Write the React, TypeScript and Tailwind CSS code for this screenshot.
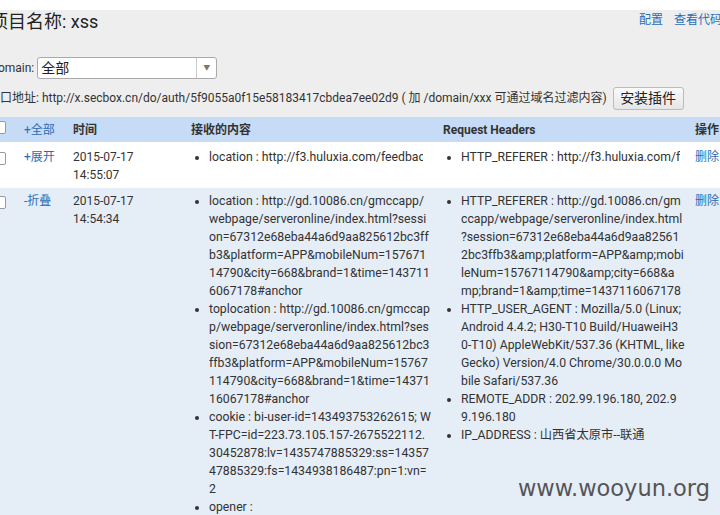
const font = "font-['Roboto','Noto_Sans_CJK_SC',sans-serif]";

const Box = () => (
  <span className="inline-block w-[13px] h-[13px] rounded-[2px] border border-[#9a9a9a] bg-white align-top"></span>
);

const contentItems = [
  "location : http://gd.10086.cn/gmccapp/webpage/serveronline/index.html\u200B?session=67312e68eba44a6d9aa825612bc3ffb3&platform=APP&mobileNum=15767114790&city=668&brand=1&time=1437116067178#anchor",
  "toplocation : http://gd.10086.cn/gmccapp/webpage/serveronline/index.html\u200B?session=67312e68eba44a6d9aa825612bc3ffb3&platform=APP&mobileNum=15767114790&city=668&brand=1&time=1437116067178#anchor",
  "cookie : bi-user-id=143493753262615; WT-FPC=id=223.73.105.157-2675522112.30452878:lv=1435747885329:ss=1435747885329:fs=1434938186487:pn=1:vn=2",
  "opener :",
];

export default function App() {
  return (
    <div className={`relative w-[720px] h-[515px] overflow-hidden bg-[#eeeeee] text-[#333] ${font}`}>
      <div className="h-[10px] bg-white"></div>
      <div className="ml-[-10px] w-[780px]">
        {/* title row */}
        <div className="flex items-start h-[24px]">
          <h1 className="text-[18px] leading-[24px] text-[#222] font-normal">项目名称: xss</h1>
          <div className="ml-auto mr-[48px] flex gap-[11px] text-[12px] leading-[20px] text-[#2a6db5]">
            <span>配置</span>
            <span>查看代码</span>
          </div>
        </div>

        {/* domain select */}
        <div className="mt-[23px] flex items-center h-[22px] text-[12px]">
          <span className="text-[#333]">Domain:</span>
          <div className="ml-[3px] w-[180px] h-[22px] flex items-stretch bg-white border border-[#aaaaaa] rounded-[3px]">
            <span className="flex-1 pl-[3px] text-[14px] leading-[20px] text-[#222]">全部</span>
            <span className="w-[20px] border-l border-[#cccccc] flex items-center justify-center text-[7px] text-[#777]">▼</span>
          </div>
        </div>

        {/* api row */}
        <div className="mt-[7px] ml-[-2px] flex items-center h-[24px] text-[12px]">
          <span className="text-[#333]">
            接口地址: http://x.secbox.cn/do/auth/5f9055a0f15e58183417cbdea7ee02d9 ( 加 /domain/xxx 可通过域名过滤内容)
          </span>
          <button className="ml-[6px] h-[23px] w-[71px] text-[14px] leading-[20px] text-[#222] border border-[#bbbbbb] rounded-[3px] bg-gradient-to-b from-[#fafafa] to-[#e6e6e6]">
            安装插件
          </button>
        </div>

        {/* table */}
        <table className="mt-[7px] table-fixed border-collapse w-[770px] text-[12px] leading-[18px]">
          <colgroup>
            <col className="w-[28px]" />
            <col className="w-[49px]" />
            <col className="w-[118px]" />
            <col className="w-[252px]" />
            <col className="w-[252px]" />
            <col className="w-[71px]" />
          </colgroup>
          <thead>
            <tr className="bg-[#c6dbf5] h-[25px] text-left">
              <th className="pl-[3px] align-middle"><Box /></th>
              <th className="px-[6px] font-normal text-[#2a6db5]">+全部</th>
              <th className="px-[6px] font-bold text-[#333]">时间</th>
              <th className="px-[6px] font-bold text-[#333]">接收的内容</th>
              <th className="px-[6px] font-bold text-[#333]">Request Headers</th>
              <th className="px-[6px] font-bold text-[#333]">操作</th>
            </tr>
          </thead>
          <tbody>
            <tr className="bg-white align-top">
              <td className="pl-[3px] pt-[10px]"><Box /></td>
              <td className="px-[6px] pt-[6px] pb-[4px] text-[#2a6db5]">+展开</td>
              <td className="px-[6px] pt-[6px] pb-[4px]">2015-07-17<br />14:55:07</td>
              <td className="pl-[6px] pr-[14px] pt-[6px] pb-[4px] text-[12.25px]">
                <ul className="list-disc pl-[18px] whitespace-nowrap overflow-hidden">
                  <li>location : http://f3.huluxia.com/feedback?type=1</li>
                </ul>
              </td>
              <td className="pl-[6px] pr-[9px] pt-[6px] pb-[4px] text-[12.25px]">
                <ul className="list-disc pl-[18px] whitespace-nowrap overflow-hidden">
                  <li>HTTP_REFERER : http://f3.huluxia.com/feedback</li>
                </ul>
              </td>
              <td className="px-[6px] pt-[6px] pb-[4px] text-[#2a6db5]">删除</td>
            </tr>
            <tr className="bg-[#e5edf7] align-top">
              <td className="pl-[3px] pt-[8px]"><Box /></td>
              <td className="px-[6px] pt-[4px] pb-[3px] text-[#2a6db5]">-折叠</td>
              <td className="px-[6px] pt-[4px] pb-[3px]">2015-07-17<br />14:54:34</td>
              <td className="px-[6px] pt-[4px] pb-[3px] text-[12.25px]">
                <ul className="list-disc pl-[18px] break-all">
                  {contentItems.map((t) => (
                    <li key={t}>{t}</li>
                  ))}
                </ul>
              </td>
              <td className="pl-[6px] pr-[4px] pt-[4px] pb-[3px] text-[12.25px]">
                <ul className="list-disc pl-[18px] break-all">
                  <li>
                    HTTP_REFERER : http://gd.10086.cn/gmccapp/webpage/serveronline/index.html{"\u200B"}?session=67312e68eba44a6d9aa825612bc3ffb3&amp;amp;platform=APP&amp;amp;mobileNum=15767114790&amp;amp;city=668&amp;amp;brand=1&amp;amp;time=1437116067178
                  </li>
                  <li className="break-normal mr-[-6px]">
                    HTTP_USER_AGENT : Mozilla/5.0 (Linux; Android 4.4.2; H30-T10 Build/HuaweiH3{"\u200B"}
                    <span className="whitespace-nowrap">0-T10)</span> AppleWebKit/537.36 (KHTML, like Gecko) Version/4.0 Chrome/30.0.0.0 Mo{"\u200B"}bile Safari/537.36
                  </li>
                  <li>REMOTE_ADDR : 202.99.196.180, 202.99.196.180</li>
                  <li>IP_ADDRESS : 山西省太原市--联通</li>
                </ul>
              </td>
              <td className="px-[6px] pt-[4px] pb-[3px] text-[#2a6db5]">删除</td>
            </tr>
          </tbody>
        </table>
      </div>

      {/* watermark */}
      <div className="absolute right-[10px] bottom-[13px] text-[22.5px] leading-[28px] text-[#555] font-['DejaVu_Sans',sans-serif]">
        www.wooyun.org
      </div>
    </div>
  );
}
